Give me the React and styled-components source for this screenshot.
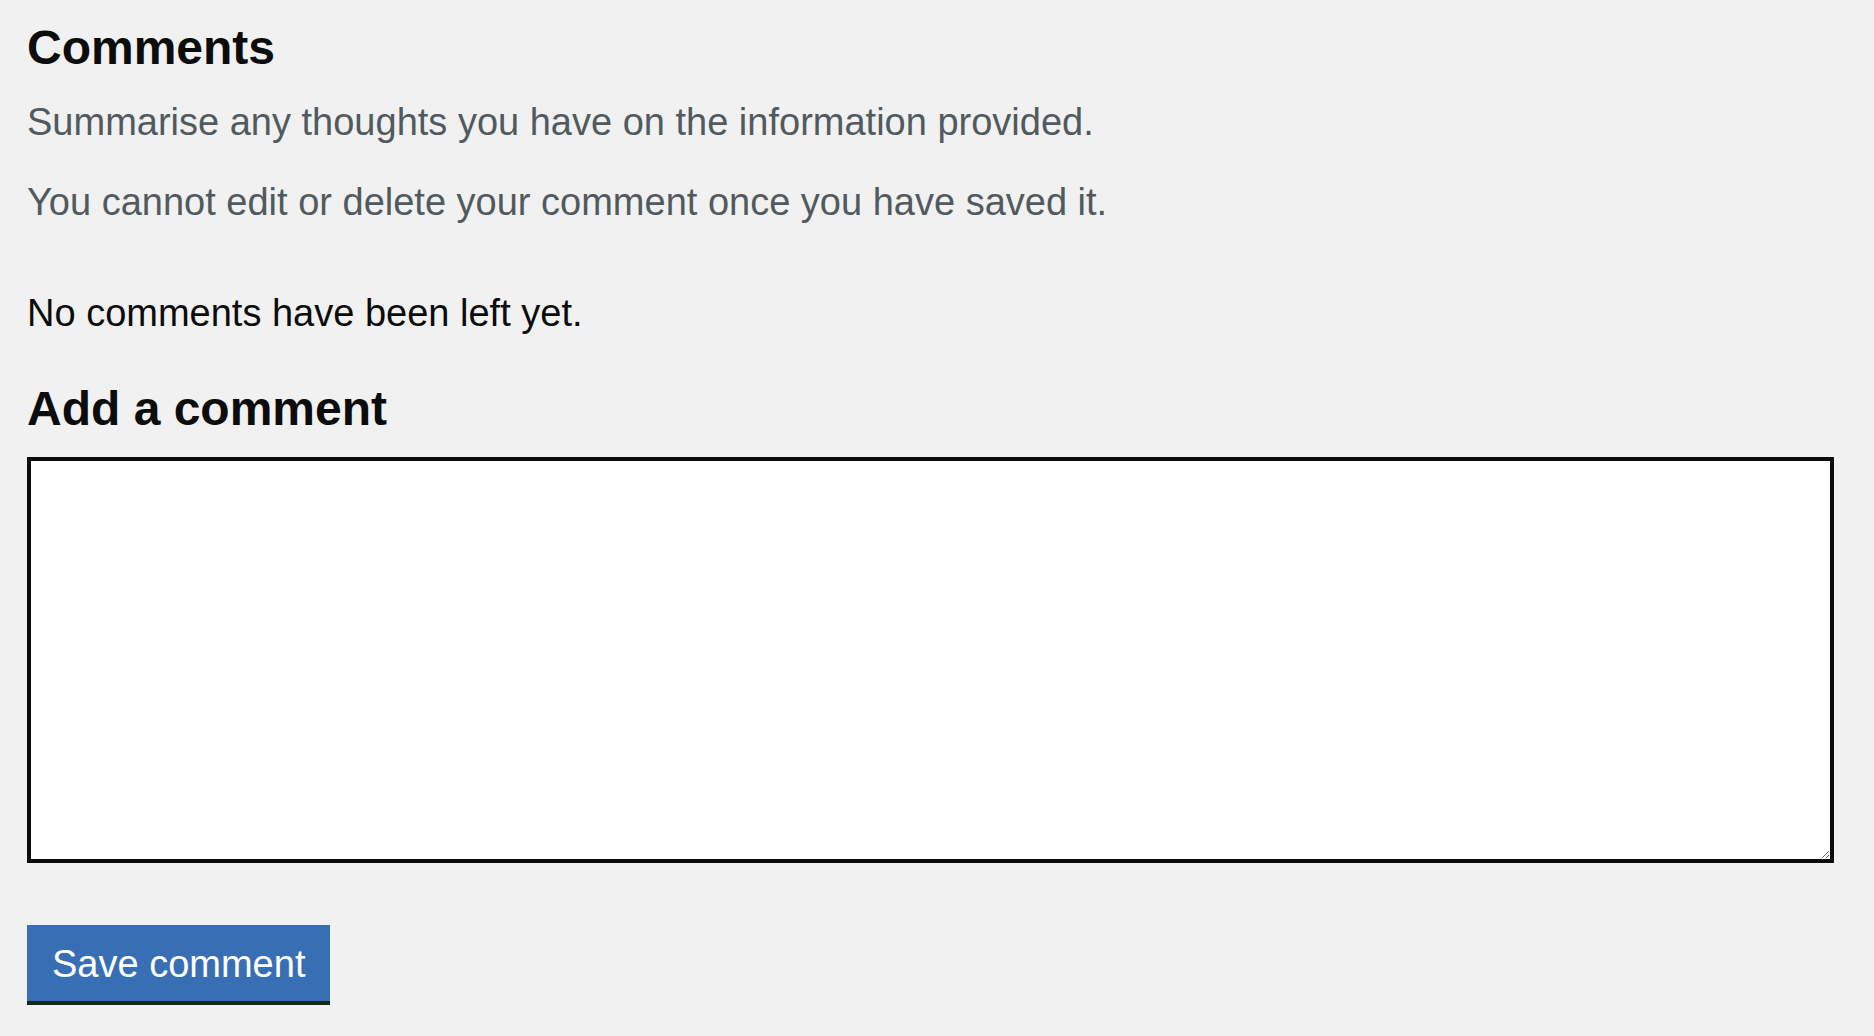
import React from 'react';
import styled, { createGlobalStyle } from 'styled-components';

const GlobalStyle = createGlobalStyle`
  html, body {
    margin: 0;
    padding: 0;
    background-color: #f1f1f1;
  }
  body {
    font-family: "Liberation Sans", Arial, Helvetica, sans-serif;
    color: #0b0c0c;
  }
`

const Page = styled.main`
  padding: 18px 40px 40px 27px;
`

const Heading = styled.h2`
  margin: 0 0 ${props => props.$gap || 0}px 0;
  font-size: 48px;
  line-height: 60px;
  font-weight: 700;
  color: #0b0c0c;
`

const Hint = styled.p`
  margin: 0 0 30px 0;
  font-size: 38px;
  line-height: 50px;
  color: #505a5f;
`

// top margin collapses with the hint's 30px below it
const Body = styled.p`
  margin: 61px 0 41px 0;
  font-size: 38px;
  line-height: 50px;
  color: #0b0c0c;
`

const CommentBox = styled.textarea`
  display: block;
  box-sizing: border-box;
  width: 100%;
  height: 406px;
  margin: 0 0 62px 0;
  padding: 10px;
  border: 4px solid #0b0c0c;
  border-radius: 0;
  background: #fff;
  font-family: inherit;
  font-size: 38px;
  line-height: 50px;
  resize: vertical;
  outline: none;
`

const SaveButton = styled.button`
  display: inline-block;
  margin: 0;
  padding: 14px 25px 12px 25px;
  border: 0;
  border-radius: 0;
  background-color: #386fb4;
  box-shadow: 0 4px 0 #13271b;
  color: #fff;
  font-family: inherit;
  font-size: 38px;
  line-height: 50px;
  cursor: pointer;
`

const App = () => {
  return (
    <>
      <GlobalStyle />
      <Page>
        <Heading $gap={19}>Comments</Heading>
        <Hint>Summarise any thoughts you have on the information provided.</Hint>
        <Hint>You cannot edit or delete your comment once you have saved it.</Hint>
        <Body>No comments have been left yet.</Body>
        <Heading $gap={18}>Add a comment</Heading>
        <CommentBox aria-label="Add a comment" />
        <SaveButton type="button">Save comment</SaveButton>
      </Page>
    </>
  )
}

export default App;
